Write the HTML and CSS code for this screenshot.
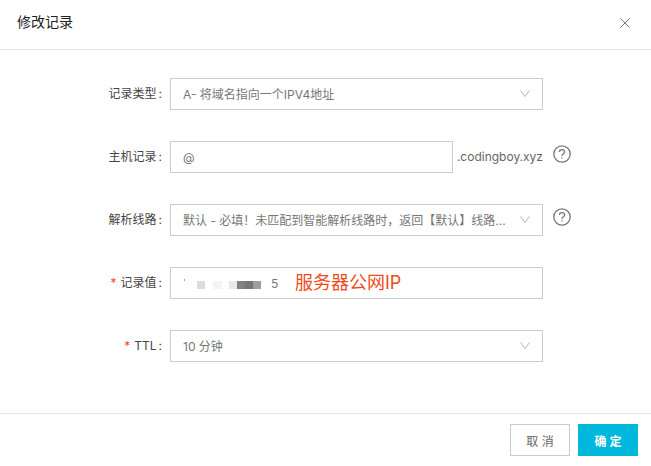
FILE: index.html
```html
<!DOCTYPE html>
<html lang="zh-CN">
<head>
  <meta charset="UTF-8" />
  <meta name="viewport" content="width=device-width, initial-scale=1.0"/>
  <title>修改记录</title>
  <link rel="stylesheet" href="styles.css">
</head>
<body>

  <form class="dialog">
    <div class="header">
      <h1>修改记录</h1>
      <button type="button" class="close-btn" aria-label="关闭">
        <svg width="10" height="10" viewBox="0 0 10 10"><path d="M0.5 0.5L9.5 9.5M9.5 0.5L0.5 9.5"/></svg>
      </button>
    </div>

    <div class="content">
      <div class="row">
        <label for="type">记录类型<span class="colon">:</span></label>
        <div class="select-box">
          <select id="type">
            <option>A- 将域名指向一个IPV4地址</option>
          </select>
          <svg class="arrow" width="10" height="8" viewBox="0 0 10 8"><path d="M0.5 0.5L5 6.5L9.5 0.5"/></svg>
        </div>
      </div>

      <div class="row">
        <label for="host">主机记录<span class="colon">:</span></label>
        <div class="host-box">
          <input type="text" id="host" class="text-input" value="@">
          <span class="domain">.codingboy.xyz</span>
        </div>
        <button type="button" class="help-btn" aria-label="帮助">
          <svg width="18" height="18" viewBox="0 0 18 18"><circle cx="9" cy="9" r="8.2"/><path d="M6.4 7.1C6.4 5.5 7.5 4.6 9 4.6S11.6 5.5 11.6 6.9C11.6 8.7 9 8.8 9 10.9"/><path d="M9 12.2V13.5"/></svg>
        </button>
      </div>

      <div class="row">
        <label for="line">解析线路<span class="colon">:</span></label>
        <div class="select-box">
          <select id="line">
            <option>默认 - 必填！未匹配到智能解析线路时，返回【默认】线路...</option>
          </select>
          <svg class="arrow" width="10" height="8" viewBox="0 0 10 8"><path d="M0.5 0.5L5 6.5L9.5 0.5"/></svg>
        </div>
        <button type="button" class="help-btn" aria-label="帮助">
          <svg width="18" height="18" viewBox="0 0 18 18"><circle cx="9" cy="9" r="8.2"/><path d="M6.4 7.1C6.4 5.5 7.5 4.6 9 4.6S11.6 5.5 11.6 6.9C11.6 8.7 9 8.8 9 10.9"/><path d="M9 12.2V13.5"/></svg>
        </button>
      </div>

      <div class="row">
        <label for="value"><span class="required">*</span>记录值<span class="colon">:</span></label>
        <div class="value-box">
          <!-- masked part of the address -->
          <svg class="mask" width="88" height="30" viewBox="0 0 88 30">
            <rect x="1" y="11" width="1" height="2" fill="#aaa"/>
            <rect x="14" y="13" width="8" height="8" fill="#dcdcdc"/>
            <rect x="30" y="13" width="9" height="8" fill="#f4f4f4"/>
            <rect x="46" y="13" width="8" height="8" fill="#e9e9e9"/>
            <rect x="54" y="13" width="8" height="8" fill="#808080"/>
            <rect x="62" y="13" width="8" height="8" fill="#757575"/>
            <rect x="70" y="13" width="8" height="8" fill="#9e9e9e"/>
          </svg>
          <input type="text" id="value" value="5">
          <span class="note">服务器公网IP</span>
        </div>
      </div>

      <div class="row">
        <label for="ttl"><span class="required">*</span>TTL<span class="colon">:</span></label>
        <div class="select-box">
          <select id="ttl">
            <option>10 分钟</option>
          </select>
          <svg class="arrow" width="10" height="8" viewBox="0 0 10 8"><path d="M0.5 0.5L5 6.5L9.5 0.5"/></svg>
        </div>
      </div>
    </div>

    <div class="footer">
      <button type="button" class="btn">取 消</button>
      <button type="submit" class="btn btn-primary">确 定</button>
    </div>
  </form>

</body>
</html>
```
FILE: styles.css
```css
* {
  box-sizing: border-box;
}
body {
  margin: 0;
  background-color: white;
  font-family: Inter, "Noto Sans CJK SC", sans-serif;
  font-size: 12px;
  line-height: 18px;
  color: #444;
}
input, select, button {
  margin: 0;
  font-family: inherit;
  font-size: 12px;
  color: #777;
}
svg {
  display: block;
  fill: none;
}
.header {
  display: flex;
  justify-content: space-between;
  align-items: center;
  padding: 12px 16px 17px 17px;
  border-bottom: 1px solid #e5e5e5;
}
.header h1 {
  margin: 0;
  font-size: 14px;
  font-weight: 400;
  line-height: 20px;
  color: #222;
}
.close-btn {
  padding: 6px 5px 4px;
  border: none;
  background: none;
  cursor: pointer;
  stroke: #777;
}
.content {
  display: flex;
  flex-direction: column;
  gap: 31px;
  padding: 28px 0 51px;
}
.row {
  display: grid;
  grid-template-columns: minmax(0, 162fr) minmax(0, 373fr) minmax(0, 100fr);
  align-items: center;
  column-gap: 8px;
}
.row label {
  text-align: right;
}
.colon {
  margin-left: 2px;
}
.required {
  margin-right: 4px;
  color: #f04a2a;
}
.select-box {
  position: relative;
}
.select-box select,
.text-input {
  width: 100%;
  height: 32px;
  padding: 0 12px;
  border: 1px solid #ccc;
  border-radius: 0;
  background-color: white;
}
.select-box select {
  appearance: none;
  padding-right: 32px;
}
.arrow {
  position: absolute;
  top: 12px;
  right: 13px;
  stroke: #b5b5b5;
  pointer-events: none;
}
.host-box {
  display: flex;
  align-items: center;
  gap: 4px;
}
.text-input {
  flex: 1;
  min-width: 0;
}
.domain {
  color: #666;
}
.help-btn {
  justify-self: start;
  padding: 0 2px 6px;
  border: none;
  background: none;
  cursor: pointer;
  stroke: #777;
  stroke-width: 1.3;
}
.value-box {
  display: flex;
  align-items: center;
  height: 32px;
  padding: 0 12px;
  border: 1px solid #ccc;
}
.value-box input {
  width: 24px;
  padding: 0;
  border: none;
  background: none;
}
.note {
  font-size: 18px;
  line-height: 30px;
  color: #ee4a1c;
}
.footer {
  display: flex;
  justify-content: flex-end;
  gap: 8px;
  padding: 10px 13px 10px 14px;
  border-top: 1px solid #e5e5e5;
}
.btn {
  width: 60px;
  height: 32px;
  padding: 0;
  border: 1px solid #ccc;
  background-color: white;
  color: #666;
  cursor: pointer;
}
.btn-primary {
  border-color: #00b8dc;
  background-color: #00b8dc;
  font-weight: 700;
  color: white;
}
```
